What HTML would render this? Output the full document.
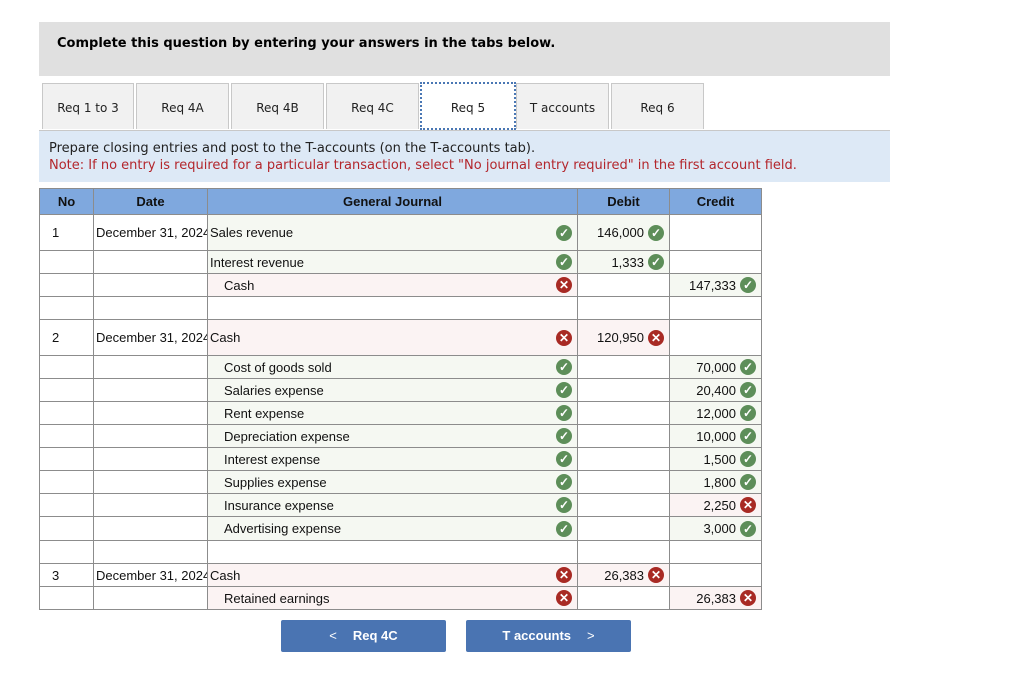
<!DOCTYPE html>
<html><head><meta charset="utf-8"><style>
body{margin:0;background:#fff;width:1020px;height:686px;position:relative;overflow:hidden;font-family:"Liberation Sans",Arial,sans-serif;}
.top{position:absolute;left:39px;top:22px;width:851px;height:54px;background:#e0e0e0;}
.top b{position:absolute;left:18px;top:14px;font:bold 13px "DejaVu Sans",Verdana,sans-serif;color:#000;}
.tab{position:absolute;top:83px;height:46px;background:#f1f1f1;border:1px solid #c8c8c8;border-bottom:none;font:12px "DejaVu Sans",Verdana,sans-serif;color:#222;text-align:center;line-height:48px;box-sizing:border-box;}
.tab.act{background:#fff;border:2px dotted #4a77b4;height:48px;line-height:48px;top:82px;}
.info{position:absolute;left:39px;top:130px;width:851px;height:52px;background:#dde9f6;border-top:1px solid #c8c8c8;box-sizing:border-box;font:13px "DejaVu Sans",Verdana,sans-serif;}
.info div{position:absolute;left:10px;white-space:nowrap;}
table{position:absolute;left:39px;top:188px;border-collapse:collapse;font-size:13px;color:#111;table-layout:fixed;width:722px;}
td,th{border:1px solid #8c8c8c;padding:0;box-sizing:border-box;}
th{background:#7fa8de;height:26px;font-weight:bold;font-size:13px;}
td{height:23px;background:#fff;position:relative;}
.g{background:#f5f8f2;}.p{background:#fbf3f3;}
.c1{text-align:center;}
.c2{padding-left:2px;white-space:nowrap;overflow:hidden;}
.gj{padding-left:2px;}
.in{padding-left:16px;}
.num{text-align:right;padding-right:25px;}
.i{position:absolute;top:50%;margin-top:-8px;width:16px;height:16px;border-radius:50%;color:#fff;font-size:12px;line-height:16px;text-align:center;font-weight:bold;}
.ok{background:#5d8e59;}.no{background:#a82a24;}
.gj .i{right:5px;}.num .i{right:5px;}
.btn{position:absolute;top:620px;height:32px;background:#4a74b2;border-radius:2px;color:#fff;font-weight:bold;font-size:13px;line-height:32px;text-align:center;}
</style></head><body>
<div class="top"><b>Complete this question by entering your answers in the tabs below.</b></div>
<div class="tab" style="left:42px;width:92px">Req 1 to 3</div>
<div class="tab" style="left:136px;width:93px">Req 4A</div>
<div class="tab" style="left:231px;width:93px">Req 4B</div>
<div class="tab" style="left:326px;width:93px">Req 4C</div>
<div class="tab act" style="left:420px;width:96px">Req 5</div>
<div class="tab" style="left:516px;width:93px">T accounts</div>
<div class="tab" style="left:611px;width:93px">Req 6</div>
<div class="info"><div style="top:10px;color:#222">Prepare closing entries and post to the T-accounts (on the T-accounts tab).</div><div style="top:27px;color:#b3262c">Note: If no entry is required for a particular transaction, select "No journal entry required" in the first account field.</div></div>
<table>
<colgroup><col style="width:54px"><col style="width:114px"><col style="width:370px"><col style="width:92px"><col style="width:92px"></colgroup>
<tr><th>No</th><th>Date</th><th>General Journal</th><th>Debit</th><th>Credit</th></tr>
<tr style="height:36px"><td class="c1" style="text-align:left;padding-left:12px">1</td><td class="c2">December 31, 2024</td><td class="gj g">Sales revenue<span class="i ok">✓</span></td><td class="num g">146,000<span class="i ok">✓</span></td><td></td></tr>
<tr><td></td><td></td><td class="gj g">Interest revenue<span class="i ok">✓</span></td><td class="num g">1,333<span class="i ok">✓</span></td><td></td></tr>
<tr><td></td><td></td><td class="gj in p">Cash<span class="i no">✕</span></td><td></td><td class="num g">147,333<span class="i ok">✓</span></td></tr>
<tr><td></td><td></td><td></td><td></td><td></td></tr>
<tr style="height:36px"><td class="c1" style="text-align:left;padding-left:12px">2</td><td class="c2">December 31, 2024</td><td class="gj p">Cash<span class="i no">✕</span></td><td class="num p">120,950<span class="i no">✕</span></td><td></td></tr>
<tr><td></td><td></td><td class="gj in g">Cost of goods sold<span class="i ok">✓</span></td><td></td><td class="num g">70,000<span class="i ok">✓</span></td></tr>
<tr><td></td><td></td><td class="gj in g">Salaries expense<span class="i ok">✓</span></td><td></td><td class="num g">20,400<span class="i ok">✓</span></td></tr>
<tr><td></td><td></td><td class="gj in g">Rent expense<span class="i ok">✓</span></td><td></td><td class="num g">12,000<span class="i ok">✓</span></td></tr>
<tr><td></td><td></td><td class="gj in g">Depreciation expense<span class="i ok">✓</span></td><td></td><td class="num g">10,000<span class="i ok">✓</span></td></tr>
<tr><td></td><td></td><td class="gj in g">Interest expense<span class="i ok">✓</span></td><td></td><td class="num g">1,500<span class="i ok">✓</span></td></tr>
<tr><td></td><td></td><td class="gj in g">Supplies expense<span class="i ok">✓</span></td><td></td><td class="num g">1,800<span class="i ok">✓</span></td></tr>
<tr><td></td><td></td><td class="gj in g">Insurance expense<span class="i ok">✓</span></td><td></td><td class="num p">2,250<span class="i no">✕</span></td></tr>
<tr style="height:24px"><td></td><td></td><td class="gj in g">Advertising expense<span class="i ok">✓</span></td><td></td><td class="num g">3,000<span class="i ok">✓</span></td></tr>
<tr><td></td><td></td><td></td><td></td><td></td></tr>
<tr><td class="c1" style="text-align:left;padding-left:12px">3</td><td class="c2">December 31, 2024</td><td class="gj p">Cash<span class="i no">✕</span></td><td class="num p">26,383<span class="i no">✕</span></td><td></td></tr>
<tr><td></td><td></td><td class="gj in p">Retained earnings<span class="i no">✕</span></td><td></td><td class="num p">26,383<span class="i no">✕</span></td></tr>
</table>
<div class="btn" style="left:281px;width:165px"><span style="font-weight:normal;margin-right:16px">&lt;</span>Req 4C</div>
<div class="btn" style="left:466px;width:165px">T accounts<span style="font-weight:normal;margin-left:16px">&gt;</span></div>
</body></html>
